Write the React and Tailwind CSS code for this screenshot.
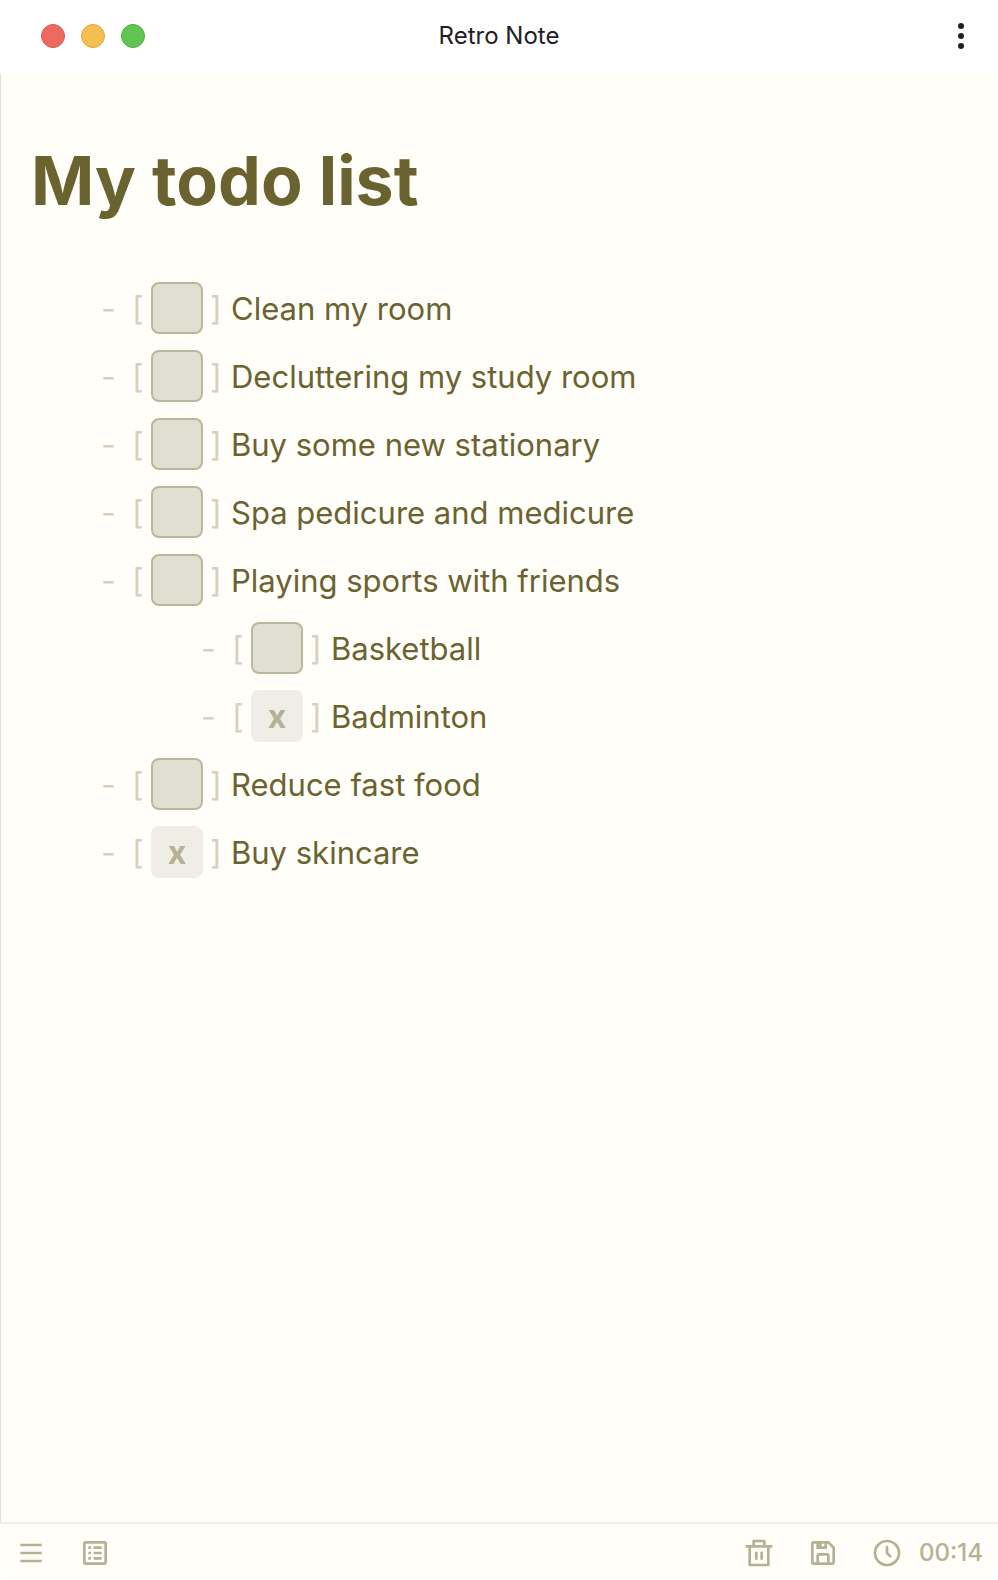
const items = [
  { text: "Clean my room" },
  { text: "Decluttering my study room" },
  { text: "Buy some new stationary" },
  { text: "Spa pedicure and medicure" },
  {
    text: "Playing sports with friends",
    children: [{ text: "Basketball" }, { text: "Badminton", done: true }],
  },
  { text: "Reduce fast food" },
  { text: "Buy skincare", done: true },
];

function Item({ item }) {
  return (
    <li className="flex flex-col gap-4">
      <label className="flex h-[52px] items-center text-[31px] leading-[50px] text-[#6b632f]">
        <span aria-hidden="true" className="w-[31px] shrink-0 pt-0.5 text-[32px] text-[#d5d2c0]">-</span>
        <span aria-hidden="true" className="w-[19px] shrink-0 pt-0.5 text-[32px] text-[#d5d2c0]">[</span>
        <span className="relative size-[52px] shrink-0">
          <input
            type="checkbox"
            defaultChecked={!!item.done}
            className="peer block size-[52px] appearance-none rounded-lg border-2 border-[#bab79b] bg-[#e1dfd2] checked:border-[#efeee6] checked:bg-[#efeee6]"
          />
          <span aria-hidden="true" className="pointer-events-none absolute inset-0 hidden pt-0.5 text-center text-[32px] font-bold text-[#b5b194] peer-checked:block">x</span>
        </span>
        <span aria-hidden="true" className="w-7 shrink-0 pt-0.5 pl-[7px] text-[32px] text-[#d5d2c0]">]</span>
        <span className="pt-0.5">{item.text}</span>
      </label>
      {item.children && <List items={item.children} />}
    </li>
  );
}

function List({ items }) {
  return (
    <ul className="flex flex-col gap-4 pl-[100px]">
      {items.map((item) => (
        <Item key={item.text} item={item} />
      ))}
    </ul>
  );
}

function Icon({ children }) {
  return (
    <svg viewBox="0 0 24 24" className="size-8" fill="currentColor" aria-hidden="true">
      {children}
    </svg>
  );
}

export default function App() {
  return (
    <div className="flex min-h-screen flex-col overflow-hidden rounded-[14px] bg-[#fffef9] font-['Inter',sans-serif]">
      <header className="grid h-[74px] grid-cols-[1fr_auto_1fr] items-center bg-white px-[19px] pb-0.5">
        <div className="flex gap-4 pl-[22px]">
          <button aria-label="Close" className="size-6 rounded-full border border-[#d95b50] bg-[#ec6a5e]" />
          <button aria-label="Minimize" className="size-6 rounded-full border border-[#dba63f] bg-[#f5bf4f]" />
          <button aria-label="Zoom" className="size-6 rounded-full border border-[#52ab42] bg-[#61c554]" />
        </div>
        <h1 className="text-2xl text-[#1f2024]">Retro Note</h1>
        <button aria-label="More" className="flex size-9 items-center justify-center justify-self-end text-[#1f2024]">
          <svg viewBox="0 0 36 36" className="size-9" fill="currentColor" aria-hidden="true">
            <circle cx="18" cy="8" r="3" />
            <circle cx="18" cy="18" r="3" />
            <circle cx="18" cy="28" r="3" />
          </svg>
        </button>
      </header>
      <main className="flex-1 border-l border-[#e0dfd8] pt-[62px] pr-8">
        <h2 className="pl-[30px] text-[68px] leading-[88px] font-bold text-[#6b632f]">My todo list</h2>
        <div className="pt-[58px]">
          <List items={items} />
        </div>
      </main>
      <footer className="flex h-[58px] items-center justify-between border-t-2 border-[#efeee6] px-[15px] pt-0.5 text-[#b5b194]">
        <div className="flex gap-8">
          <button aria-label="Menu">
            <Icon><path d="M4 5h16v2H4zM4 11h16v2H4zM4 17h16v2H4z" /></Icon>
          </button>
          <button aria-label="Notes">
            <Icon>
              <rect x="4" y="4" width="16" height="16" rx="1" fill="none" stroke="currentColor" strokeWidth="2" />
              <path d="M7 7h2v2H7zM11 7h6v2h-6zM7 11h2v2H7zM11 11h6v2h-6zM7 15h2v2H7zM11 15h6v2h-6z" />
            </Icon>
          </button>
        </div>
        <div className="flex items-center gap-8">
          <button aria-label="Delete">
            <Icon>
              <path d="M7 6V3q0-1 1-1h8q1 0 1 1v3h5v2h-2v13q0 1-1 1H5q-1 0-1-1V8H2V6zm2-2v2h6V4zM6 8v12h12V8zm3 3h2v6H9zm4 0h2v6h-2z" fillRule="evenodd" />
            </Icon>
          </button>
          <button aria-label="Save">
            <Icon>
              <path d="M5 21h14a2 2 0 0 0 2-2V8a1 1 0 0 0-.29-.71l-4-4A1 1 0 0 0 16 3H5a2 2 0 0 0-2 2v14a2 2 0 0 0 2 2zm10-2H9v-5h6zM13 7h-2V5h2zM5 5h2v4h8V5h.59L19 8.41V19h-2v-5a2 2 0 0 0-2-2H9a2 2 0 0 0-2 2v5H5z" />
            </Icon>
          </button>
          <div className="flex items-center gap-4">
            <Icon>
              <circle cx="12" cy="12" r="9" fill="none" stroke="currentColor" strokeWidth="2" />
              <path d="M12 7.5V12l2.5 2.5" fill="none" stroke="currentColor" strokeWidth="2" strokeLinecap="round" strokeLinejoin="round" />
            </Icon>
            <time className="text-2xl font-medium">00:14</time>
          </div>
        </div>
      </footer>
    </div>
  );
}
